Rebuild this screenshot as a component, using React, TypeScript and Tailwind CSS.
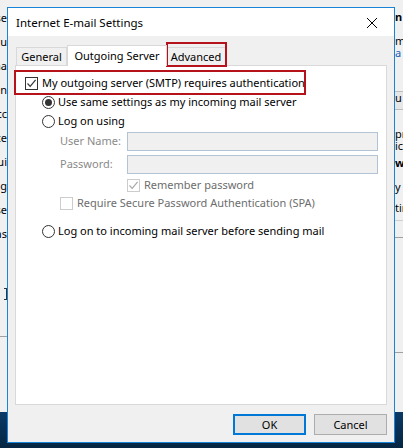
import React from "react";

const font = { fontFamily: '"Noto Sans", "Segoe UI", sans-serif' };

const Check = ({ color = "#333" }: { color?: string }) => (
  <svg width="11" height="11" viewBox="0 0 11 11" className="block">
    <path d="M1.5 5.5 L4.2 8.3 L9.6 1.8" fill="none" stroke={color} strokeWidth="1.2" />
  </svg>
);

const Checkbox = ({ checked, disabled }: { checked?: boolean; disabled?: boolean }) => (
  <span
    className={`flex h-[13px] w-[13px] flex-none items-center justify-center border ${
      disabled ? "border-[#cccccc] bg-white" : "border-[#333333] bg-white"
    }`}
  >
    {checked && <Check color={disabled ? "#a8a8a8" : "#333"} />}
  </span>
);

const Radio = ({ checked }: { checked?: boolean }) => (
  <span className="flex h-[13px] w-[13px] flex-none items-center justify-center rounded-full border border-[#333333] bg-white">
    {checked && <span className="h-[7px] w-[7px] rounded-full bg-[#333333]" />}
  </span>
);

const leftBits = ["se", "u", "na", "en", "cc", "ce", "ui", "og", "se", "as"];

const App = () => {
  return (
    <div className="relative h-[448px] w-[403px] overflow-hidden bg-[#f0f0f0] text-[11px] text-black" style={font}>
      {/* window behind the dialog */}
      <div className="flex h-full flex-col">
        <div className="flex h-[412px] justify-between">
          <div className="flex w-[7px] flex-col pt-[10px]">
            {leftBits.map((t, i) => (
              <div key={i} className="flex h-[24px] justify-end overflow-hidden whitespace-nowrap leading-[16px]">
                {t}
              </div>
            ))}
            <div className="mt-[38px] flex h-[12px] justify-end overflow-hidden">
              <span className="h-[12px] w-[3px] border-y border-r border-[#333]" />
            </div>
            <div className="mt-[36px] h-px bg-[#a0a0a0]" />
          </div>
          <div className="flex w-[8px] flex-col overflow-hidden whitespace-nowrap leading-[12px]">
            <div className="mt-[11px] font-bold">n</div>
            <div className="mt-[12px]">me</div>
            <div className="text-[#1a5fb4]">a</div>
            <div className="mt-[32px] h-[19px] border-y border-[#bcbcbc] bg-[#e6e6e6]">u</div>
            <div className="mt-[18px]">pr</div>
            <div>ic</div>
            <div className="mt-[5px] font-bold">w</div>
            <div className="mt-[12px]">y</div>
            <div className="mt-[9px]">tir</div>
            <div className="mt-[6px] h-px bg-[#cfcfcf]" />
            <div className="mt-[16px] h-px bg-[#a0a0a0]" />
            <div className="mt-[114px] h-px bg-[#a0a0a0]" />
          </div>
        </div>
        <div className="flex-1 bg-gradient-to-b from-[#0b3a66] to-[#062642]" />
      </div>

      {/* dialog window */}
      <div className="absolute left-[7px] top-[7px] flex h-[436px] w-[388px] flex-col border border-[#1883d7] bg-[#f0f0f0]">
        <div className="flex h-[28px] flex-none items-center justify-between bg-white pl-[8px] pr-[8px] pt-[2px]">
          <span className="text-[11.5px]">Internet E-mail Settings</span>
          <svg width="12" height="12" viewBox="0 0 12 12" className="mr-[8px]">
            <path d="M1 1 L11 11 M11 1 L1 11" stroke="#000" strokeWidth="1" />
          </svg>
        </div>

        <div className="flex flex-1 flex-col px-[7px] pb-[7px]">
          {/* tabs */}
          <div className="flex h-[29px] items-end pl-px">
            <div className="flex h-[18px] w-[51px] items-center justify-center border border-b-0 border-[#d9d9d9] bg-[#f0f0f0] pt-[2px]">
              General
            </div>
            <div className="relative z-10 -mb-px flex h-[21px] w-[100px] items-start justify-center border border-b-0 border-[#d9d9d9] bg-white pt-[2px]">
              Outgoing Server
            </div>
            <div className="relative flex h-[18px] w-[59px] items-center justify-center border border-b-0 border-l-0 border-[#d9d9d9] pt-[2px]">
              Advanced
              <span className="absolute -left-px -top-[6px] h-[25px] w-[61px] border-2 border-[#b5121b]" />
            </div>
          </div>

          {/* panel */}
          <div className="flex flex-1 flex-col border border-[#d9d9d9] bg-white pl-[8px] pt-[10px]">
            <div className="relative flex h-[14px] items-center gap-[4px] pl-px">
              <Checkbox checked />
              <span>My outgoing server (SMTP) requires authentication</span>
              <span className="absolute -left-[10px] -top-[6px] h-[25px] w-[292px] border-2 border-[#b5121b]" />
            </div>

            <div className="mt-[5px] flex flex-col pl-[18px]">
              <div className="flex h-[14px] items-center gap-[3px]">
                <Radio checked />
                <span>Use same settings as my incoming mail server</span>
              </div>
              <div className="mt-[5px] flex h-[14px] items-center gap-[3px]">
                <Radio />
                <span>Log on using</span>
              </div>

              <div className="mt-[4px] flex flex-col gap-[4px] pl-[18px] text-[#8a8a8a]">
                <div className="flex items-center">
                  <span className="w-[67px]">User Name:</span>
                  <span className="h-[19px] w-[251px] border border-[#b3c3d6] bg-[#f0f0f0]" />
                </div>
                <div className="flex items-center">
                  <span className="w-[67px]">Password:</span>
                  <span className="h-[19px] w-[251px] border border-[#b3c3d6] bg-[#f0f0f0]" />
                </div>
                <div className="flex h-[14px] items-center gap-[4px] pl-[67px]">
                  <Checkbox checked disabled />
                  <span className="text-[#6d6d6d]">Remember password</span>
                </div>
                <div className="flex h-[14px] items-center gap-[4px]">
                  <Checkbox disabled />
                  <span className="text-[#6d6d6d]">Require Secure Password Authentication (SPA)</span>
                </div>
              </div>

              <div className="mt-[14px] flex h-[14px] items-center gap-[3px]">
                <Radio />
                <span>Log on to incoming mail server before sending mail</span>
              </div>
            </div>
          </div>

          {/* buttons */}
          <div className="flex justify-end gap-[8px] pt-[9px]">
            <button className="h-[21px] w-[73px] border-2 border-[#0078d7] bg-[#e1e1e1] leading-none">OK</button>
            <button className="h-[21px] w-[73px] border border-[#adadad] bg-[#e1e1e1] leading-none">Cancel</button>
          </div>
        </div>
      </div>
    </div>
  );
};

export default App;
